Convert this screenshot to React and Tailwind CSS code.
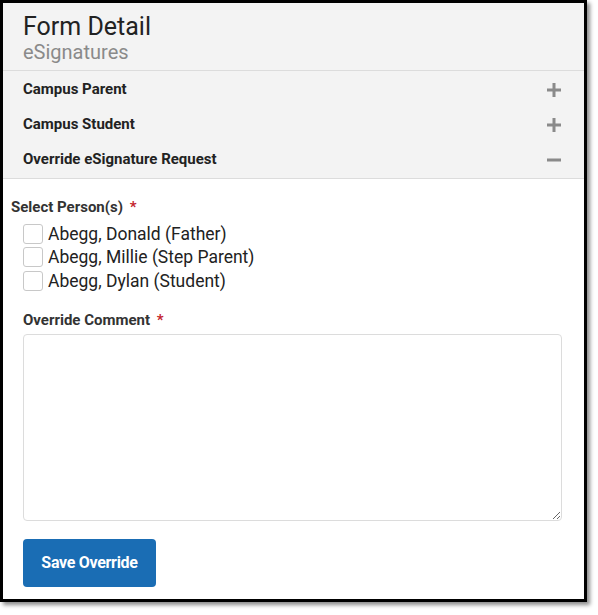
import React from "react";

function Plus() {
  return (
    <svg width="14" height="14" viewBox="0 0 14 14">
      <rect x="0" y="5.5" width="14" height="3" fill="#8a8a8a" />
      <rect x="5.5" y="0" width="3" height="14" fill="#8a8a8a" />
    </svg>
  );
}
function Minus() {
  return (
    <svg width="14" height="14" viewBox="0 0 14 14">
      <rect x="0" y="5.5" width="14" height="3" fill="#8a8a8a" />
    </svg>
  );
}

function Row({ label, open }) {
  return (
    <div className="flex h-[35px] items-center justify-between pl-[20px] pr-[23px]">
      <span className="text-[15px] font-bold text-[#222]">{label}</span>
      {open ? <Minus /> : <Plus />}
    </div>
  );
}

function Check({ label }) {
  return (
    <label className="flex h-[23.5px] items-center gap-[5px]">
      <span className="h-[20px] w-[20px] shrink-0 rounded-[3px] border border-[#c8c8c8] bg-white" />
      <span className="text-[17.5px] leading-[20px] text-[#222]">{label}</span>
    </label>
  );
}

export default function App() {
  return (
    <div className="h-[615px] bg-white" style={{ fontFamily: "Roboto, 'Liberation Sans', sans-serif" }}>
      <div className="flex h-[602px] w-[587px] flex-col border-[3px] border-black bg-white shadow-[3px_3px_4px_rgba(0,0,0,0.45)]">
        <div className="bg-[#f3f3f3]">
          <div className="h-[68px] border-b border-[#dcdcdc] pl-[20px] pt-[9px]">
            <div className="text-[25px] leading-[30px] text-[#222]">Form Detail</div>
            <div className="text-[20px] leading-[20px] text-[#8a8a8a]">eSignatures</div>
          </div>
          <div className="border-b border-[#dcdcdc] pt-[1px] pb-[1px]">
            <Row label="Campus Parent" />
            <Row label="Campus Student" />
            <Row label="Override eSignature Request" open />
          </div>
        </div>
        <div className="flex flex-col px-[8px] pt-[19px]">
          <div className="text-[15px] font-bold leading-[18px] text-[#333]">
            Select Person(s) <span className="ml-[3px] text-[#c4262e]">*</span>
          </div>
          <div className="mt-[6px] flex flex-col pl-[12px]">
            <Check label="Abegg, Donald (Father)" />
            <Check label="Abegg, Millie (Step Parent)" />
            <Check label="Abegg, Dylan (Student)" />
          </div>
          <div className="flex flex-col pl-[12px] pr-[14px]">
            <div className="mt-[18px] text-[15px] font-bold leading-[18px] text-[#333]">
              Override Comment <span className="ml-[3px] text-[#c4262e]">*</span>
            </div>
            <textarea className="mt-[5px] h-[187px] w-full resize-y rounded-[4px] border border-[#dcdcdc] bg-white outline-none" />
            <div className="mt-[18px]">
              <button className="h-[48px] w-[133px] rounded-[4px] bg-[#1a6db4] text-[16px] font-bold tracking-[-0.3px] text-white">
                Save Override
              </button>
            </div>
          </div>
        </div>
      </div>
    </div>
  );
}
